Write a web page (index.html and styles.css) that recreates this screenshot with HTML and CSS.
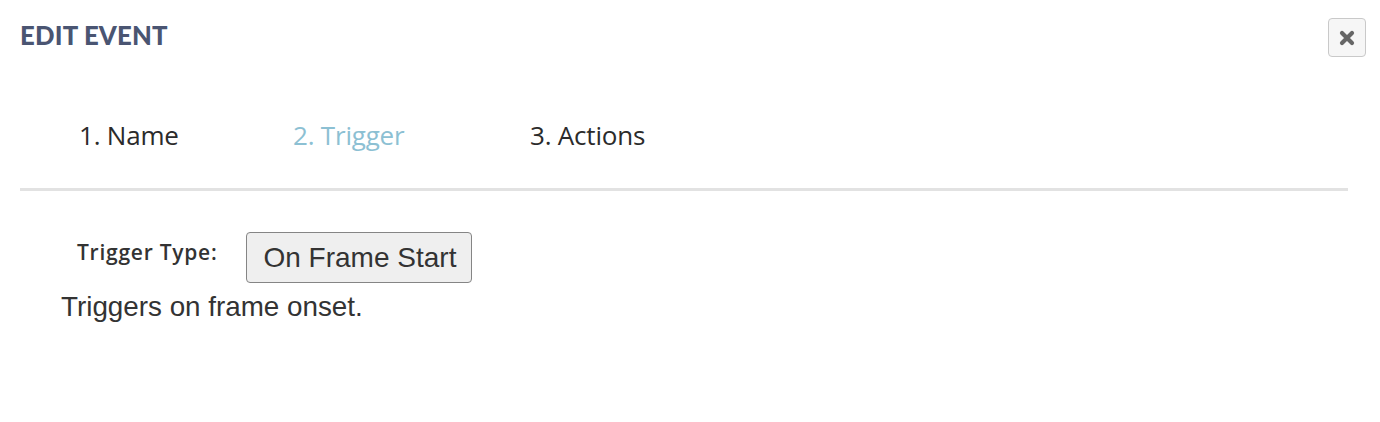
FILE: index.html
```html
<!DOCTYPE html>
<html>
<head>
<meta charset="utf-8">
<link rel="stylesheet" href="styles.css">
</head>
<body>
<div class="modal">
  <header class="modal-header">
    <h2 class="modal-title">EDIT EVENT</h2>
    <button class="close-btn" aria-label="Close">
      <svg width="16" height="16" viewBox="0 0 16 16"><path d="M3 3 L13 13 M13 3 L3 13" stroke="#666" stroke-width="4.2" stroke-linecap="round"/></svg>
    </button>
  </header>
  <nav class="steps">
    <span class="step step-name">1. Name</span>
    <span class="step step-trigger active">2. Trigger</span>
    <span class="step">3. Actions</span>
  </nav>
  <div class="modal-body">
    <div class="field-row">
      <label class="field-label">Trigger Type:</label>
      <button class="select-btn">On Frame Start</button>
    </div>
    <p class="description">Triggers on frame onset.</p>
  </div>
</div>
</body>
</html>
```
FILE: styles.css
```css
html, body {
  margin: 0;
  padding: 0;
  background: #fff;
}
.modal {
  width: 1380px;
  height: 422px;
  box-sizing: border-box;
  padding: 0 12px 0 20px;
}
.modal-header {
  display: flex;
  justify-content: space-between;
  align-items: flex-start;
  padding-top: 18px;
}
.modal-title {
  margin: 3px 0 0 0;
  font-family: Lato, "Open Sans", sans-serif;
  font-weight: 900;
  font-size: 25.7px;
  letter-spacing: 0.2px;
  line-height: 28px;
  color: #4a5572;
}
.close-btn {
  width: 38px;
  height: 39px;
  margin-right: 2px;
  padding: 0;
  border: 1px solid #c9c9c9;
  border-radius: 4px;
  background: #f6f6f6;
  display: flex;
  align-items: center;
  justify-content: center;
}
.steps {
  display: flex;
  margin-top: 62px;
  margin-right: 20px;
  padding: 0 0 37px 59px;
  border-bottom: 3px solid #e2e2e2;
}
.step {
  font-family: "Open Sans", sans-serif;
  font-size: 26px;
  line-height: 32px;
  color: #2b2b2b;
  letter-spacing: -0.2px;
}
.step-name {
  width: 214px;
}
.step-trigger {
  width: 237px;
}
.step.active {
  color: #8cc0d3;
}
.modal-body {
  padding: 41px 0 0 41px;
}
.field-row {
  display: flex;
  align-items: center;
  gap: 29px;
}
.field-label {
  margin-left: 16px;
  margin-bottom: 12px;
  font-family: "Open Sans", sans-serif;
  font-weight: 600;
  font-size: 21px;
  letter-spacing: 0.75px;
  color: #333;
}
.select-btn {
  height: 51px;
  padding: 0 15px 0 16px;
  border: 1px solid #858585;
  border-radius: 4px;
  background: #efefef;
  font-family: "Liberation Sans", Arial, sans-serif;
  font-size: 28px;
  color: #333;
}
.description {
  margin: 8px 0 0 0;
  font-family: "Liberation Sans", Arial, sans-serif;
  font-size: 27.8px;
  color: #333;
}
```
